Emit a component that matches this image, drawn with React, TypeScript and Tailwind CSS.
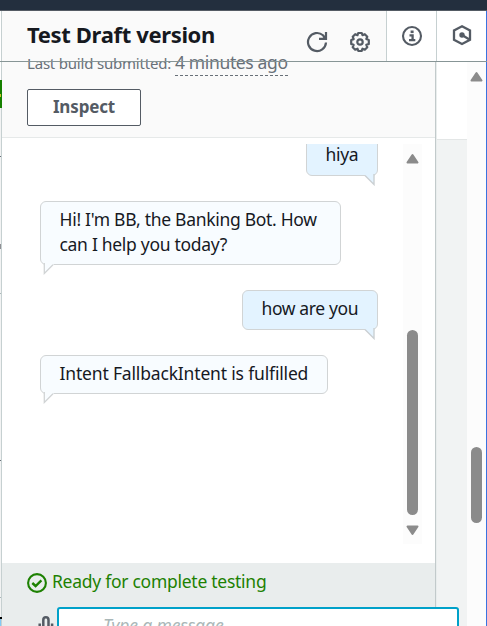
import React from "react";

function Tail({ side }: { side: "left" | "right" }) {
  return side === "left" ? (
    <svg className="absolute left-[2px] top-full -mt-[1.5px]" width="12" height="12" viewBox="0 0 12 12" aria-hidden="true">
      <path d="M1 0v10.5L10.5 1.5 11 0z" fill="#f8fcff" />
      <path d="M1.3 0v10.5L10 1.8" fill="none" stroke="#d1d4d5" strokeWidth="1.3" />
    </svg>
  ) : (
    <svg className="absolute right-[1px] top-full -mt-[1.5px]" width="12" height="12" viewBox="0 0 12 12" aria-hidden="true">
      <path d="M1 0v1.5L10 10.5V0z" fill="#e3f3ff" />
      <path d="M1 1.5l9 9V0" fill="none" stroke="#cbd0d3" strokeWidth="1.4" />
    </svg>
  );
}

function Bubble({ side, className, children }: { side: "left" | "right"; className: string; children: React.ReactNode }) {
  const tone = side === "left" ? "self-start bg-[#f8fcff]" : "self-end bg-[#e3f3ff]";
  return (
    <div className={`relative shrink-0 rounded-[6px] border border-[#d1d4d5] pt-[5px] pl-[18.5px] text-[17.5px] leading-[25px] whitespace-nowrap text-[#16191f] ${tone} ${className}`}>
      {children}
      <Tail side={side} />
    </div>
  );
}

function Arrow({ down = false }: { down?: boolean }) {
  return (
    <svg className={down ? "rotate-180" : ""} width="13" height="11" viewBox="0 0 13 11" aria-hidden="true">
      <path d="M6.5 2L11.5 9.5H1.5z" fill="#8b8b8b" stroke="#8b8b8b" strokeWidth="2" strokeLinejoin="round" />
    </svg>
  );
}

function Refresh() {
  return (
    <svg width="22" height="22" viewBox="0 0 22 22" fill="none" stroke="#545b64" strokeWidth="2.2" aria-hidden="true">
      <path d="M20 11.5a9 9 0 1 1-3-7.2L19.2 7" />
      <path d="M20 1v6.9H13" />
      <path d="M16 7.5L20 4v3.5z" fill="#545b64" stroke="none" />
    </svg>
  );
}

function Gear() {
  return (
    <svg width="22" height="22" viewBox="0 0 22 22" fill="none" stroke="#545b64" strokeWidth="2.2" strokeLinejoin="round" aria-hidden="true">
      <path d="M9.2 2h3.6l.7 2.2 2.3-1 2.5 2.5-1 2.2 2.5 1v4.1l-2.5.9 1 2.3-2.5 2.5-2.3-1-.9 2.3H9.3l-.8-2.3-2.3 1-2.5-2.5 1-2.3-2.5-.9V9l2.5-.9-1-2.4 2.5-2.5 2.3 1z" />
      <circle cx="11" cy="11" r="2.7" />
    </svg>
  );
}

function Info() {
  return (
    <svg width="22" height="22" viewBox="0 0 22 22" fill="none" stroke="#545b64" aria-hidden="true">
      <circle cx="11" cy="11" r="9" strokeWidth="2.1" />
      <path d="M9.6 6.8h3" strokeWidth="2.6" />
      <path d="M8.5 10.4h3.1v4.7M8 15.1h6.3" strokeWidth="2.3" />
    </svg>
  );
}

function Hexagon() {
  return (
    <svg width="22" height="22" viewBox="0 0 22 22" fill="none" stroke="#545b64" strokeWidth="2.3" aria-hidden="true">
      <path d="M11 2.2L19 6.5v9.2l-8 4.2-8-4.2V6.5z" />
      <circle cx="11" cy="11" r="2.7" fill="#545b64" stroke="none" />
      <path d="M11 11l7 4.2" />
    </svg>
  );
}

export default function App() {
  return (
    <div className="relative flex h-[626px] w-[487px] flex-col overflow-hidden bg-white font-['Noto_Sans',sans-serif]">
      <div className="h-[11px] shrink-0 border-b border-[#545b64] bg-[#232f3e]" />

      <div className="flex min-h-0 flex-1">
        <div className="flex w-[2px] shrink-0 flex-col border-r border-[#c6d0d1] bg-[#f2f3f3]">
          <div className="h-[69px] shrink-0 bg-white" />
          <div className="z-20 h-[28px] w-[2px] shrink-0 bg-[#168000] pt-[14px]">
            <div className="h-[3px] w-px bg-[#c9c629]" />
          </div>
          <div className="mt-[48px] h-px shrink-0 bg-[#687078]" />
          <div className="mt-[87px] h-[5px] shrink-0 bg-[#8f8f94]" />
          <div className="mt-[44px] h-px shrink-0 bg-[#aab7b8]" />
          <div className="mt-[166px] h-px shrink-0 bg-[#687078]" />
          <div className="mt-[136px] h-px shrink-0 bg-[#aab7b8]" />
          <div className="mt-[19px] h-[2px] w-[2px] shrink-0 bg-black" />
          <div className="flex-1 bg-[#82c9f5]" />
        </div>

        <section className="relative z-10 flex w-[434px] shrink-0 flex-col border-r border-[#c2cacb] bg-white">
          <header className="h-[127px] shrink-0 border-b border-[#e6e9e9] bg-[#fafafa] pl-[25px]">
            <h1 className="h-[39px] pt-[8px] text-[22px] leading-[30px] font-bold tracking-[-0.35px] whitespace-nowrap text-[#16191f]">Test Draft version</h1>
            <p className="flex h-[27px] items-baseline whitespace-nowrap text-[#687078]">
              <span className="w-[148px] text-[15px] leading-[25px] tracking-[-0.2px]">Last build submitted:</span>
              <span className="h-[26px] border-b border-dashed border-[#687078] text-[17.5px] leading-[25px] tracking-[-0.36px]">4 minutes ago</span>
            </p>
            <button className="mt-[12px] h-[37px] w-[114px] rounded-[2px] border border-[#545b64] bg-white pb-[2px] text-[17px] leading-[33px] font-bold tracking-[-0.15px] text-[#545b64]">Inspect</button>
          </header>

          <div className="mt-[6px] flex h-[400px] shrink-0 overflow-hidden">
            <div className="flex w-[401px] shrink-0 flex-col overflow-hidden pr-[25px] pl-[38px]">
              <Bubble side="right" className="-mt-[8px] h-[40px] w-[72px] tracking-[-0.3px]">hiya</Bubble>
              <Bubble side="left" className="mt-[25px] h-[64px] w-[301px] tracking-[-0.3px]">
                Hi! I'm BB, the Banking Bot. How<br />can I help you today?
              </Bubble>
              <Bubble side="right" className="mt-[25px] h-[40px] w-[136px] tracking-[-0.38px]">how are you</Bubble>
              <Bubble side="left" className="mt-[25px] h-[39px] w-[288px] tracking-[-0.17px]">Intent FallbackIntent is fulfilled</Bubble>
            </div>
            <div className="flex w-[19px] shrink-0 flex-col items-center bg-[#fcfcfc] pt-[9px]">
              <Arrow />
              <div className="mt-[166px] h-[185px] w-[11px] shrink-0 rounded-full bg-[#8b8b8b]" />
              <div className="mt-[10px]"><Arrow down /></div>
            </div>
          </div>

          <footer className="mt-[19px] flex-1 bg-[#e9eded] pl-[25px]">
            <div className="flex h-[44px] items-center gap-[5px] pb-[5px] text-[17.5px] tracking-[-0.27px] whitespace-nowrap text-[#1d8102]">
              <svg width="20" height="20" viewBox="0 0 20 20" fill="none" stroke="#1d8102" strokeWidth="2.1" aria-hidden="true">
                <circle cx="10" cy="10" r="8.9" />
                <path d="M5.3 10l3.3 3 5.8-5.6" strokeWidth="2.4" />
              </svg>
              <span className="pb-[2px]">Ready for complete testing</span>
            </div>
            <div className="flex">
              <svg className="mt-[8px] ml-[11px] shrink-0" width="19" height="19" viewBox="0 0 19 19" fill="none" stroke="#545b64" strokeWidth="2.5" aria-hidden="true">
                <rect x="5.3" y="2.3" width="5.2" height="12" rx="2.6" />
                <path d="M1.7 8.5v5a4 4 0 0 0 4 4h4.400a4 4 0 0 0 4-4v-5" />
              </svg>
              <div className="h-[40px] w-[402px] shrink-0 rounded-[3px] border-2 border-[#00a1c9] bg-white pt-[4px] pl-[44px] text-[17.5px] leading-[25px] tracking-[-0.14px] text-[#aab7b8] italic">Type a message</div>
            </div>
          </footer>
        </section>

        <aside className="w-[31px] shrink-0 border-l border-[#e9eded] bg-[#f1f3f3]">
          <div className="h-[129px] border-b border-[#e3e6e6] bg-white" />
        </aside>
        <div className="flex w-[19px] shrink-0 flex-col items-center bg-[#fcfcfc] pt-[60px]">
          <Arrow />
          <div className="mt-[365px] h-[76px] w-[11px] shrink-0 rounded-full bg-[#8b8b8b]" />
        </div>
        <div className="w-px shrink-0 bg-[#3973e0]" />
      </div>

      <div className="absolute inset-x-0 top-[11px] z-20 flex h-[51px] justify-end border-b border-[#879596] pr-px">
        <div className="flex gap-[21px] pt-[20px] pr-[15px]">
          <Refresh />
          <Gear />
        </div>
        <div className="flex w-[50px] justify-center border-l border-[#c6d0d1] bg-white pt-[14px]"><Info /></div>
        <div className="flex w-[50px] justify-center border-l border-[#c6d0d1] bg-white pt-[13px]"><Hexagon /></div>
      </div>
    </div>
  );
}
